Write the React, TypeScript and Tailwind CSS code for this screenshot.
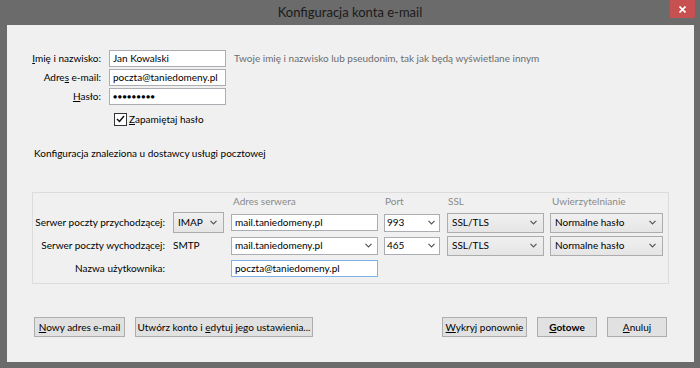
import type { ReactNode } from "react";

function Chevron() {
  return (
    <svg width="7" height="5" viewBox="0 0 7 5" className="shrink-0">
      <polyline points="0.5,0.8 3.5,3.8 6.5,0.8" fill="none" stroke="#555" strokeWidth="1.2" />
    </svg>
  );
}

function TextBox({ value, className = "", focused = false }: { value: string; className?: string; focused?: boolean }) {
  return (
    <div
      className={`flex h-[17px] items-center border bg-white pl-[3px] ${
        focused ? "border-[#7eb4ea]" : "border-[#abadb3]"
      } ${className}`}
    >
      {value}
    </div>
  );
}

function Combo({ value, className = "" }: { value: string; className?: string }) {
  return (
    <div className={`flex h-[18px] items-center justify-between border border-[#abadb3] bg-white pl-[2px] pr-[4px] ${className}`}>
      <span>{value}</span>
      <Chevron />
    </div>
  );
}

function Select({ value, className = "" }: { value: string; className?: string }) {
  return (
    <div
      className={`flex h-[20px] items-center justify-between border border-[#acacac] bg-gradient-to-b from-[#f0f0f0] to-[#e5e5e5] pl-[4px] pr-[6px] ${className}`}
    >
      <span>{value}</span>
      <Chevron />
    </div>
  );
}

function Button({ children, className = "" }: { children: ReactNode; className?: string }) {
  return (
    <div
      className={`flex h-[20px] items-center justify-center border border-[#adadad] bg-[#e1e1e1] ${className}`}
    >
      <span>{children}</span>
    </div>
  );
}

function Label({ children }: { children: ReactNode }) {
  return (
    <div className="flex items-center justify-end">
      <span>{children}</span>
    </div>
  );
}

export default function App() {
  return (
    <div className="flex h-[368px] w-[700px] flex-col bg-[#6b6b6b] font-[Lato,sans-serif] text-[10px] text-black">
      {/* title bar */}
      <div className="relative flex h-[25px] items-center justify-center">
        <span className="text-[13px] text-[#1a1a1a]">Konfiguracja konta e-mail</span>
        <div className="absolute right-[5px] top-0 flex h-[18px] w-[25px] items-center justify-center bg-[#c75050]">
          <svg width="7" height="7" viewBox="0 0 7 7">
            <path d="M0.5 0.5L6.5 6.5M6.5 0.5L0.5 6.5" stroke="#fff" strokeWidth="1.6" />
          </svg>
        </div>
      </div>

      {/* client area */}
      <div className="mb-[6px] ml-[7px] mr-[6px] flex flex-1 flex-col bg-[#f0f0f0]">
        <div className="grid grid-cols-[74px_117px_auto] gap-x-[8px] gap-y-[2px] pl-[20px] pt-[25px]">
          <Label>
            <u>I</u>mię i nazwisko:
          </Label>
          <TextBox value="Jan Kowalski" />
          <div className="flex items-center text-[#6d6d6d]">
            Twoje imię i nazwisko lub pseudonim, tak jak będą wyświetlane innym
          </div>

          <Label>
            Adre<u>s</u> e-mail:
          </Label>
          <TextBox value="poczta@taniedomeny.pl" />
          <div />

          <Label>
            <u>H</u>asło:
          </Label>
          <TextBox value="●●●●●●●●●" className="text-[7px] tracking-[0.5px]" />
          <div />

          <div className="col-start-2 mt-[3px] flex h-[18px] items-center gap-[2px] pl-[5px]">
            <div className="flex h-[13px] w-[13px] items-center justify-center border border-[#333] bg-white">
              <svg width="9" height="8" viewBox="0 0 9 8">
                <polyline points="1,4 3.5,6.5 8,1" fill="none" stroke="#111" strokeWidth="1.5" />
              </svg>
            </div>
            <span>
              <u>Z</u>apamiętaj hasło
            </span>
          </div>
        </div>

        <div className="mt-[17px] pl-[27px] leading-[16px]">
          Konfiguracja znaleziona u dostawcy usługi pocztowej
        </div>

        {/* server settings group */}
        <div className="mx-[25px] mt-[31px] border border-[#dcdcdc] pb-[4px]">
          <div className="grid grid-cols-[140px_58px_153px_63px_103px_113px] grid-rows-[17px_21px_21px_21px] gap-y-[2px]">
            <div />
            <div />
            <div className="flex items-center pl-[2px] text-[#8a8a8a]">Adres serwera</div>
            <div className="flex items-center pl-[1px] text-[#8a8a8a]">Port</div>
            <div className="flex items-center pl-[1px] text-[#8a8a8a]">SSL</div>
            <div className="flex items-center pl-[2px] text-[#8a8a8a]">Uwierzytelnianie</div>

            <div className="flex items-center justify-end pr-[8px]">Serwer poczty przychodzącej:</div>
            <div className="flex items-center">
              <Select value="IMAP" className="h-[21px] w-[51px]" />
            </div>
            <div className="flex items-center">
              <TextBox value="mail.taniedomeny.pl" className="w-[147px]" />
            </div>
            <div className="flex items-center">
              <Combo value="993" className="w-[56px]" />
            </div>
            <div className="flex items-center">
              <Select value="SSL/TLS" className="w-[97px]" />
            </div>
            <div className="flex items-center">
              <Select value="Normalne hasło" className="w-[113px]" />
            </div>

            <div className="flex items-center justify-end pr-[8px]">Serwer poczty wychodzącej:</div>
            <div className="flex items-center">SMTP</div>
            <div className="flex items-center">
              <Combo value="mail.taniedomeny.pl" className="h-[17px] w-[147px] pl-[3px] pr-[5px]" />
            </div>
            <div className="flex items-center">
              <Combo value="465" className="w-[56px]" />
            </div>
            <div className="flex items-center">
              <Select value="SSL/TLS" className="w-[97px]" />
            </div>
            <div className="flex items-center">
              <Select value="Normalne hasło" className="w-[113px]" />
            </div>

            <div className="flex items-center justify-end pr-[8px]">Nazwa użytkownika:</div>
            <div />
            <div className="flex items-center">
              <TextBox value="poczta@taniedomeny.pl" className="w-[147px]" focused />
            </div>
          </div>
        </div>

        {/* bottom buttons */}
        <div className="mt-[33px] flex justify-between px-[27px]">
          <div className="flex gap-[10px]">
            <Button className="w-[91px]">
              <u>N</u>owy adres e-mail
            </Button>
            <Button className="w-[178px]">
              Utwórz konto i <u>e</u>dytuj jego ustawienia...
            </Button>
          </div>
          <div className="flex gap-[10px]">
            <Button className="w-[85px]">
              <u>W</u>ykryj ponownie
            </Button>
            <Button className="w-[60px] font-bold">
              <u>G</u>otowe
            </Button>
            <Button className="w-[60px]">
              <u>A</u>nuluj
            </Button>
          </div>
        </div>
      </div>
    </div>
  );
}
